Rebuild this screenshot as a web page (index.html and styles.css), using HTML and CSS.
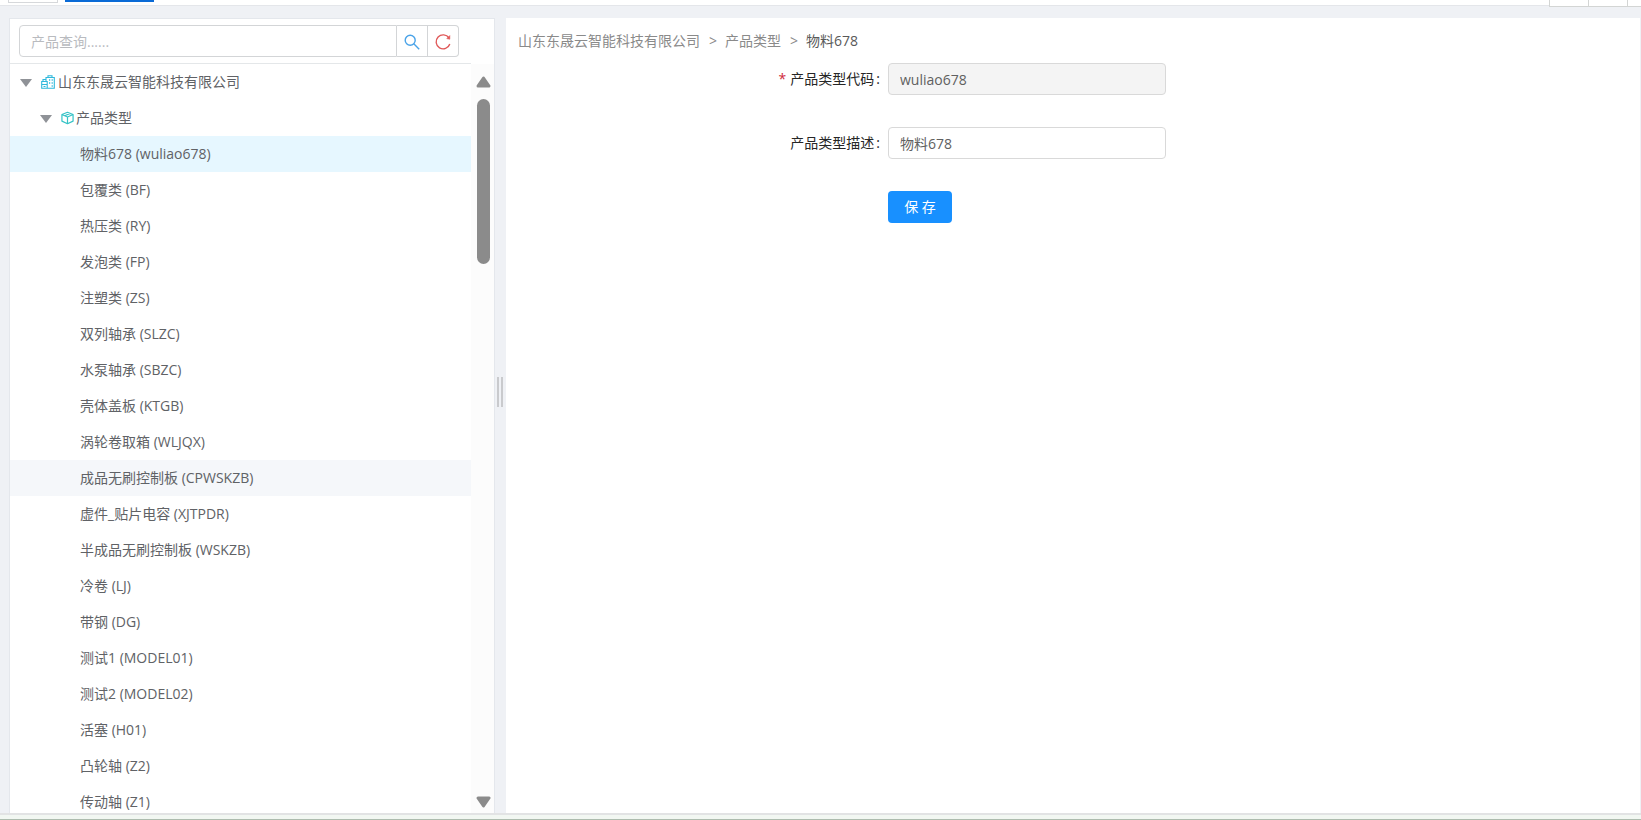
FILE: index.html
```html
<!DOCTYPE html>
<html lang="zh-CN">
<head>
<meta charset="utf-8">
<title>产品类型</title>
<link rel="stylesheet" href="styles.css">
</head>
<body>
<header class="tabbar">
  <div class="tab"></div>
  <div class="tab tab-active"></div>
  <div class="tab-tools"><span class="tool"></span><span class="tool"></span><span class="tool tool-last"></span></div>
</header>
<div class="workspace">
  <aside class="sidebar">
    <form class="search">
      <input class="search-input" type="text" placeholder="产品查询......" aria-label="产品查询">
      <button class="search-button" type="button" aria-label="查询">
        <svg width="16" height="16" viewBox="0 0 16 16" fill="none" stroke="#4aa3e8" stroke-width="1.4"><circle cx="6.2" cy="6.2" r="5"/><path d="M9.8 9.8L15.2 15.2"/></svg>
      </button>
      <button class="search-button search-reset" type="button" aria-label="刷新">
        <svg width="18" height="18" viewBox="0 0 18 18" fill="none" stroke="#e05a5a" stroke-width="1.4"><path d="M15 5A7 7 0 1 0 15.8 11"/><path d="M15.8 2.6V6.2L12.8 5.6Z" fill="#e05a5a" stroke-width=".6"/></svg>
      </button>
    </form>
    <div class="tree-area">
      <ul class="tree">
        <li class="node node-root"><span class="arrow"></span>
          <svg class="node-icon" width="14" height="14" viewBox="0 0 14 14" fill="none" stroke="#2fb9dc" stroke-width="1.1"><path d="M.7 6.5H6.2V13.3H.7ZM2 6.5V4.5H5V6.5M5 4.5V2.5H13.3V13.3H6.2M7 2.5V.7H11V2.5M.7 9.5H6.2M2.5 11.5H4.5"/><path d="M8 5H9.2M10.6 5H11.8M8 8H9.2M10.6 8H11.8M10.6 11H11.8" stroke-width="1.6"/></svg>
          <span>山东东晟云智能科技有限公司</span></li>
        <li class="node node-group"><span class="arrow"></span>
          <svg class="node-icon" width="13" height="14" viewBox="0 0 14 14" fill="none" stroke="#35c3c6" stroke-width="1.3" stroke-linejoin="round"><path d="M7 .8L13 3.2V10.4L7 13.2L1 10.4V3.2ZM1 3.2L7 6L13 3.2M7 6V13M4 4.6L10 2"/></svg>
          <span>产品类型</span></li>
        <li class="node leaf selected">物料678 (wuliao678)</li>
        <li class="node leaf">包覆类 (BF)</li>
        <li class="node leaf">热压类 (RY)</li>
        <li class="node leaf">发泡类 (FP)</li>
        <li class="node leaf">注塑类 (ZS)</li>
        <li class="node leaf">双列轴承 (SLZC)</li>
        <li class="node leaf">水泵轴承 (SBZC)</li>
        <li class="node leaf">壳体盖板 (KTGB)</li>
        <li class="node leaf">涡轮卷取箱 (WLJQX)</li>
        <li class="node leaf hovered">成品无刷控制板 (CPWSKZB)</li>
        <li class="node leaf">虚件_贴片电容 (XJTPDR)</li>
        <li class="node leaf">半成品无刷控制板 (WSKZB)</li>
        <li class="node leaf">冷卷 (LJ)</li>
        <li class="node leaf">带钢 (DG)</li>
        <li class="node leaf">测试1 (MODEL01)</li>
        <li class="node leaf">测试2 (MODEL02)</li>
        <li class="node leaf">活塞 (H01)</li>
        <li class="node leaf">凸轮轴 (Z2)</li>
        <li class="node leaf">传动轴 (Z1)</li>
      </ul>
      <div class="scrollbar">
        <svg width="15" height="12" viewBox="0 0 15 12"><path d="M7.5 2L13 10H2Z" fill="#8b8b8b" stroke="#8b8b8b" stroke-width="3" stroke-linejoin="round"/></svg>
        <div class="track"><div class="thumb"></div></div>
        <svg width="15" height="12" viewBox="0 0 15 12"><path d="M7.5 10L13 2H2Z" fill="#8b8b8b" stroke="#8b8b8b" stroke-width="3" stroke-linejoin="round"/></svg>
      </div>
    </div>
  </aside>
  <div class="splitter"><span class="grip"></span></div>
  <main class="content">
    <nav class="breadcrumb" aria-label="路径">
      <a>山东东晟云智能科技有限公司</a><span class="sep">&gt;</span><a>产品类型</a><span class="sep">&gt;</span><span class="current">物料678</span>
    </nav>
    <form class="form">
      <label class="label" for="code"><span class="required">*</span>产品类型代码<span class="colon">:</span></label>
      <input class="field" id="code" type="text" value="wuliao678" disabled>
      <label class="label" for="desc">产品类型描述<span class="colon">:</span></label>
      <input class="field" id="desc" type="text" value="物料678">
      <button class="save" type="button">保 存</button>
    </form>
  </main>
</div>
<footer class="statusbar"></footer>
</body>
</html>
```
FILE: styles.css
```css
* {
  box-sizing: border-box;
}

body {
  display: flex;
  flex-direction: column;
  height: 100vh;
  margin: 0;
  overflow: hidden;
  background: #eff1f5;
  color: #606266;
  font: 14px/22px "Open Sans", "Noto Sans CJK SC", sans-serif;
}

input,
button {
  font: inherit;
}

.tabbar {
  display: flex;
  flex: none;
  gap: 7px;
  height: 6px;
  padding-left: 8px;
  background: #fff;
  border-bottom: 1px solid #e4e6ea;
}

.tab {
  width: 50px;
  height: 3px;
  border: solid #d6d8db;
  border-width: 0 1px 1px;
}

.tab-active {
  width: 89px;
  height: 2px;
  background: #0a6ad6;
  border: 0;
}

.tab-tools {
  display: flex;
  height: 7px;
  margin-left: auto;
  background: #fff;
  border-bottom: 1px solid #d3d5d4;
}

.tool {
  width: 39px;
  border-left: 1px solid #d3d5d4;
}

.tool-last {
  width: 14px;
}

.workspace {
  display: flex;
  flex: 1;
  min-height: 0;
  padding: 12px 1px 0 9px;
}

.sidebar {
  display: flex;
  flex: none;
  flex-direction: column;
  width: 486px;
  background: #fff;
  border: solid #e4e7ec;
  border-width: 1px 1px 0;
}

.search {
  display: flex;
  flex: none;
  width: 461px;
  height: 45px;
  padding: 6px 12px 6px 9px;
  border-bottom: 1px solid #e4e7e9;
}

.search-input {
  flex: 1;
  min-width: 0;
  padding: 1px 11px 0;
  border: 1px solid #d3d5d7;
  border-radius: 4px 0 0 4px;
  outline: 0;
}

.search-input::placeholder {
  color: #b9bbbf;
}

.search-button {
  display: flex;
  align-items: center;
  justify-content: center;
  width: 31px;
  padding: 1px 0 0;
  background: #fff;
  border: solid #d3d5d7;
  border-width: 1px 1px 1px 0;
}

.search-reset {
  border-radius: 0 4px 4px 0;
}

.tree-area {
  display: flex;
  flex: 1;
  min-height: 0;
}

.tree {
  flex: 1;
  margin: 0;
  padding: 0;
  overflow: hidden;
  list-style: none;
}

.node {
  display: flex;
  align-items: center;
  height: 36px;
}

.node-root {
  padding-left: 10px;
}

.node-group {
  padding-left: 30px;
}

.arrow {
  margin: 2px 9px 0 0;
  border: solid transparent;
  border-width: 8px 6px 0;
  border-top-color: #8f9297;
}

.node-icon {
  margin-right: 2px;
}

.node-root .node-icon {
  margin-right: 3px;
}

.leaf {
  padding-left: 70px;
}

.selected {
  background: #e6f7ff;
}

.hovered {
  background: #f5f7fa;
}

.scrollbar {
  display: flex;
  flex: none;
  flex-direction: column;
  align-items: center;
  width: 23px;
  padding: 12px 0 5px 1px;
  background: #fcfcfc;
}

.track {
  flex: 1;
  padding: 11px 0;
}

.thumb {
  width: 13px;
  height: 165px;
  background: #8b8b8b;
  border-radius: 7px;
}

.splitter {
  display: flex;
  flex: none;
  align-items: center;
  justify-content: center;
  width: 11px;
  padding-right: 1px;
}

.grip {
  width: 6px;
  height: 30px;
  margin-bottom: 48px;
  border: solid #c9cacd;
  border-width: 0 2px;
}

.content {
  flex: 1;
  padding: 12px;
  background: #fff;
}

.breadcrumb {
  display: flex;
  color: #8a8a8a;
}

.sep {
  margin: 0 8px 0 9px;
}

.current {
  color: #595959;
}

.form {
  display: grid;
  grid-template-columns: repeat(3, 1fr);
  row-gap: 32px;
  margin-top: 11px;
}

.label {
  grid-column: 1;
  padding-right: 8px;
  color: #262626;
  line-height: 32px;
  text-align: right;
}

.required {
  margin-right: 4px;
  color: #cf2a3a;
}

.colon {
  margin-left: 2px;
}

.field {
  width: 75%;
  height: 32px;
  padding: 0 11px;
  background: #fff;
  border: 1px solid #d9d9d9;
  border-radius: 4px;
  color: #606060;
}

.field:disabled {
  background: #f4f4f4;
}

.save {
  grid-column: 2;
  justify-self: start;
  width: 64px;
  height: 32px;
  padding: 0;
  background: #1890ff;
  border: 0;
  border-radius: 4px;
  color: #fff;
}

.statusbar {
  flex: none;
  height: 7px;
  background: #f2f7f2;
  border-top: 2px solid #e2e3e4;
  border-bottom: 1px solid #adbcae;
}
```
